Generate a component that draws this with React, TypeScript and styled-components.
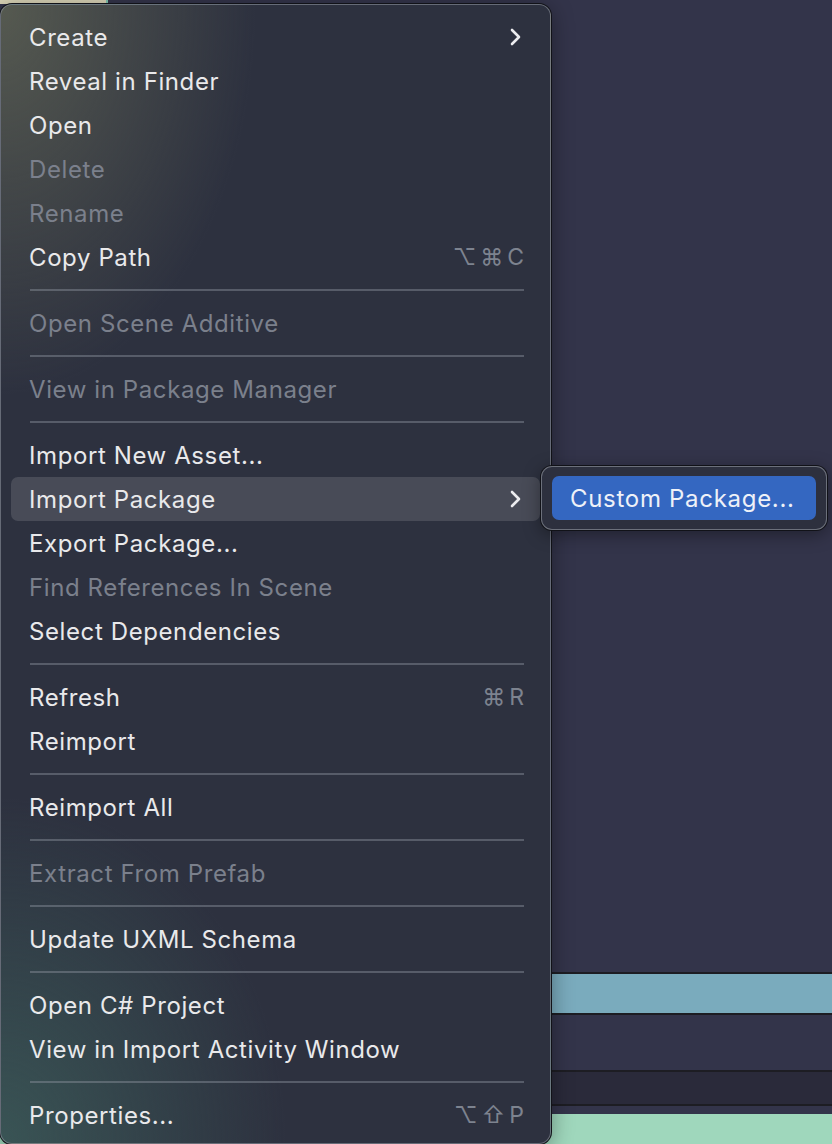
import styled, { createGlobalStyle } from "styled-components";

const GlobalStyle = createGlobalStyle`
  html, body {
    margin: 0;
    padding: 0;
    background: #33344a;
  }
  body {
    font-family: Inter, "Noto Sans", "DejaVu Sans", sans-serif;
    -webkit-font-smoothing: antialiased;
  }
`;

const Desktop = styled.div`
  position: relative;
  width: 832px;
  height: 1144px;
  overflow: hidden;
  display: flex;
  flex-direction: column;
  background: #33344a;
`;

const TopStrip = styled.div`
  height: 4px;
  display: flex;
`;

const Beige = styled.div`
  width: 106px;
  background: #d9d3b6;
  border-right: 2px solid #7fc4b0;
`;

const Band = styled.div<{ $h: number; $bg: string }>`
  height: ${(p) => p.$h}px;
  background: ${(p) => p.$bg};
  flex-shrink: 0;
`;

const Line = styled.div`
  height: 2px;
  background: #1d1d23;
  flex-shrink: 0;
`;

const Menu = styled.div`
  position: absolute;
  left: 0;
  top: 4px;
  width: 551px;
  padding: 10px 10px 6px;
  border-radius: 12px;
  border: 1px solid rgba(150, 155, 165, 0.55);
  box-shadow: 0 0 0 1px #111218, 0 4px 22px rgba(0, 0, 0, 0.4);
  background:
    radial-gradient(ellipse 340px 520px at 0% 0%, rgba(90, 94, 82, 0.9), rgba(90, 94, 82, 0) 75%),
    radial-gradient(ellipse 380px 460px at 0% 100%, rgba(58, 86, 86, 0.95), rgba(58, 86, 86, 0) 75%),
    #2d313f;
  box-sizing: border-box;
`;

const Row = styled.div<{ $disabled?: boolean; $active?: boolean }>`
  height: 44px;
  display: flex;
  align-items: center;
  justify-content: space-between;
  padding: 0 18px 0 18px;
  border-radius: 7px;
  font-size: 24px;
  letter-spacing: 0.6px;
  color: ${(p) => (p.$disabled ? "#7b808c" : "#e9e9eb")};
  background: ${(p) => (p.$active ? "rgba(255,255,255,0.13)" : "transparent")};
`;

const Label = styled.span`
  white-space: nowrap;
`;

const Shortcut = styled.span`
  color: #7d838f;
  font-size: 23px;
  letter-spacing: 4px;
  margin-right: -6px;
  font-family: Inter, "DejaVu Sans", sans-serif;
`;

const Separator = styled.div`
  height: 22px;
  display: flex;
  align-items: center;
  padding: 0 16px 0 19px;
  &::after {
    content: "";
    flex: 1;
    height: 2px;
    background: rgba(140, 146, 158, 0.45);
  }
`;

const Submenu = styled.div`
  position: absolute;
  left: 541px;
  top: 466px;
  width: 286px;
  padding: 9px 10px;
  border-radius: 11px;
  border: 1px solid rgba(150, 155, 165, 0.6);
  box-shadow: 0 0 0 1px #111218, 0 4px 18px rgba(0, 0, 0, 0.4);
  background: #2d303e;
  box-sizing: border-box;
`;

const SubItem = styled.div`
  height: 44px;
  display: flex;
  align-items: center;
  padding-left: 18px;
  border-radius: 7px;
  background: #3467c1;
  color: #eef1f8;
  font-size: 24px;
  letter-spacing: 0.7px;
`;

const Chevron = () => (
  <svg width="14" height="20" viewBox="0 0 14 20">
    <polyline
      points="4,3 11,10 4,17"
      fill="none"
      stroke="#ececef"
      strokeWidth="2.6"
      strokeLinecap="round"
      strokeLinejoin="round"
    />
  </svg>
);

type Item =
  | { sep: true }
  | { label: string; disabled?: boolean; sub?: boolean; active?: boolean; keys?: string };

const items: Item[] = [
  { label: "Create", sub: true },
  { label: "Reveal in Finder" },
  { label: "Open" },
  { label: "Delete", disabled: true },
  { label: "Rename", disabled: true },
  { label: "Copy Path", keys: "⌥⌘C" },
  { sep: true },
  { label: "Open Scene Additive", disabled: true },
  { sep: true },
  { label: "View in Package Manager", disabled: true },
  { sep: true },
  { label: "Import New Asset..." },
  { label: "Import Package", sub: true, active: true },
  { label: "Export Package..." },
  { label: "Find References In Scene", disabled: true },
  { label: "Select Dependencies" },
  { sep: true },
  { label: "Refresh", keys: "⌘R" },
  { label: "Reimport" },
  { sep: true },
  { label: "Reimport All" },
  { sep: true },
  { label: "Extract From Prefab", disabled: true },
  { sep: true },
  { label: "Update UXML Schema" },
  { sep: true },
  { label: "Open C# Project" },
  { label: "View in Import Activity Window" },
  { sep: true },
  { label: "Properties...", keys: "⌥⇧P" },
];

export default function App() {
  return (
    <>
      <GlobalStyle />
      <Desktop>
        <TopStrip>
          <Beige />
        </TopStrip>
        <Band $h={968} $bg="#33344a" />
        <Line />
        <Band $h={39} $bg="#7aabbd" />
        <Line />
        <Band $h={55} $bg="#33344a" />
        <Line />
        <Band $h={32} $bg="#2a2a3a" />
        <Line />
        <Band $h={8} $bg="#33344a" />
        <Band $h={30} $bg="#9fd7bc" />

        <Menu>
          {items.map((it, i) =>
            "sep" in it ? (
              <Separator key={i} />
            ) : (
              <Row key={i} $disabled={it.disabled} $active={it.active}>
                <Label>{it.label}</Label>
                {it.sub && <Chevron />}
                {it.keys && <Shortcut>{it.keys}</Shortcut>}
              </Row>
            )
          )}
        </Menu>

        <Submenu>
          <SubItem>Custom Package...</SubItem>
        </Submenu>
      </Desktop>
    </>
  );
}
